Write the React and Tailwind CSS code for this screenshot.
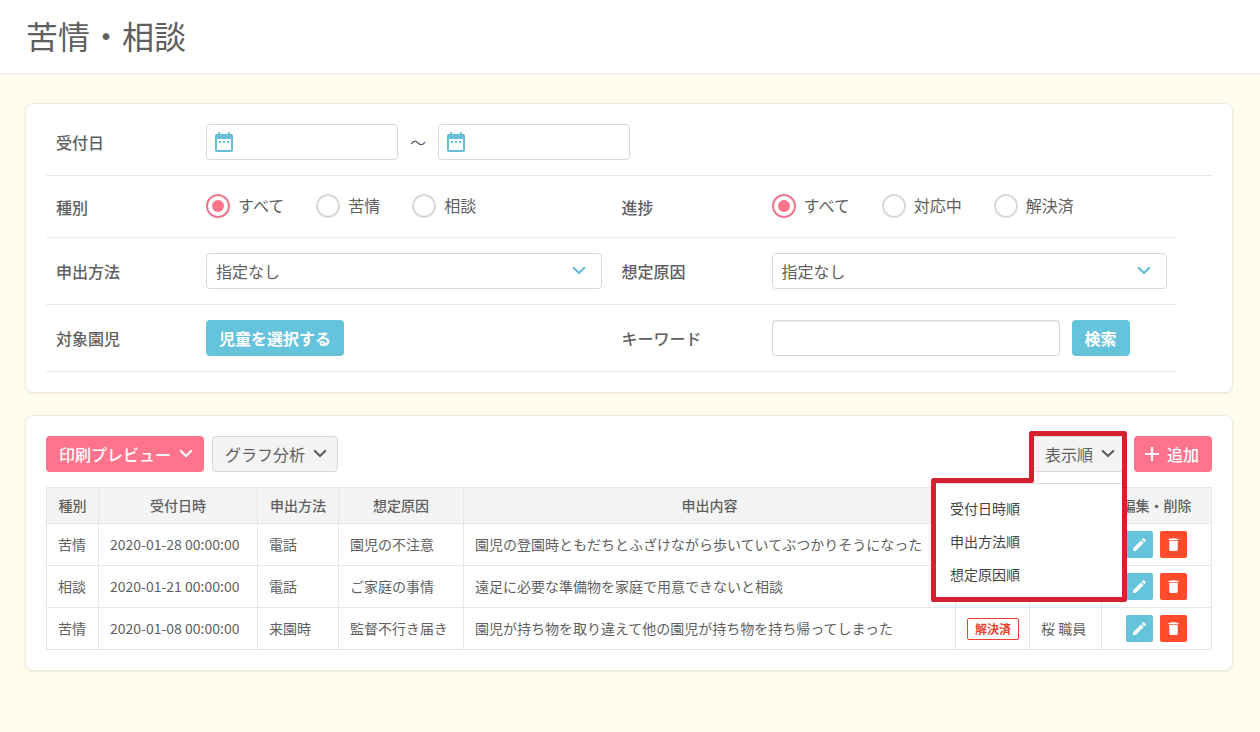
import { useState } from "react";
import { MdDateRange, MdEdit, MdDelete } from "react-icons/md";

function Chevron({ className = "" }) {
  return (
    <svg viewBox="0 0 14 14" aria-hidden="true" className={`size-[14px] shrink-0 ${className}`}>
      <path
        d="M1.8 4 7 9 12.2 4"
        fill="none"
        stroke="currentColor"
        strokeWidth="2.3"
        strokeLinecap="round"
      />
    </svg>
  );
}

function Plus() {
  return (
    <svg viewBox="0 0 14 14" aria-hidden="true" className="size-[14px] shrink-0">
      <path d="M7 0V14M0 7H14" fill="none" stroke="currentColor" strokeWidth="2.2" />
    </svg>
  );
}

function Card({ children }) {
  return (
    <section className="rounded-lg border border-[#ecebe2] bg-white p-5 shadow-[0_1px_2px_rgba(0,0,0,0.06)]">
      {children}
    </section>
  );
}

function DateBox({ label }) {
  return (
    <div className="grid items-center">
      <input
        type="text"
        aria-label={label}
        className="col-start-1 row-start-1 h-9 w-48 rounded border border-[#d9d9d9] bg-white pr-2 pl-9"
      />
      <MdDateRange
        aria-hidden="true"
        className="pointer-events-none col-start-1 row-start-1 ml-1.5 size-6 text-[#66bfd6]"
      />
    </div>
  );
}

function RadioGroup({ name, label, options }) {
  return (
    <div role="radiogroup" aria-label={label} className="flex items-center gap-8 pb-0.5">
      {options.map((option, i) => (
        <label key={option} className="flex items-center gap-2">
          <input
            type="radio"
            name={name}
            defaultChecked={i === 0}
            className="grid size-6 shrink-0 appearance-none place-items-center rounded-full border-2 border-[#d9d9d9] bg-white before:size-3 before:rounded-full checked:border-[#e8788f] checked:before:bg-[#ff748c]"
          />
          <span className="pb-0.5">{option}</span>
        </label>
      ))}
    </div>
  );
}

function Select({ id }) {
  return (
    <div className="grid flex-1 items-center">
      <select
        id={id}
        className="col-start-1 row-start-1 h-9 w-full appearance-none rounded border border-[#d9d9d9] bg-white px-[9px]"
      >
        <option>指定なし</option>
      </select>
      <Chevron className="pointer-events-none col-start-1 row-start-1 mr-4 justify-self-end text-[#66bfd6]" />
    </div>
  );
}

function Field({ label, htmlFor, children }) {
  return (
    <div className="flex min-h-[31px] flex-1 items-center pr-2.5">
      <div className="w-40 shrink-0 px-2.5 font-medium">
        {htmlFor ? <label htmlFor={htmlFor}>{label}</label> : label}
      </div>
      {children}
    </div>
  );
}

function Row({ children }) {
  return <div className="flex w-[97%] border-b border-[#e8e8e8] py-[15px]">{children}</div>;
}

function SearchPanel() {
  return (
    <Card>
      <form onSubmit={(e) => e.preventDefault()}>
        <div className="flex border-b border-[#e8e8e8] pb-[15px]">
          <Field label="受付日">
            <div className="flex items-center gap-3">
              <DateBox label="受付日（開始）" />
              <span className="w-4">～</span>
              <DateBox label="受付日（終了）" />
            </div>
          </Field>
        </div>
        <Row>
          <Field label="種別">
            <RadioGroup name="kind" label="種別" options={["すべて", "苦情", "相談"]} />
          </Field>
          <Field label="進捗">
            <RadioGroup name="progress" label="進捗" options={["すべて", "対応中", "解決済"]} />
          </Field>
        </Row>
        <Row>
          <Field label="申出方法" htmlFor="method">
            <Select id="method" />
          </Field>
          <Field label="想定原因" htmlFor="cause">
            <Select id="cause" />
          </Field>
        </Row>
        <Row>
          <Field label="対象園児">
            <button type="button" className="h-9 rounded bg-[#66c3dc] px-[13px] font-bold text-white">
              児童を選択する
            </button>
          </Field>
          <Field label="キーワード" htmlFor="keyword">
            <div className="flex gap-3">
              <input
                id="keyword"
                type="text"
                className="h-9 w-72 rounded border border-[#d9d9d9] bg-white px-2 shadow-[inset_0_1px_2px_rgba(0,0,0,0.08)]"
              />
              <button type="submit" className="h-9 rounded bg-[#66c3dc] px-[13px] font-bold text-white">
                検索
              </button>
            </div>
          </Field>
        </Row>
      </form>
    </Card>
  );
}

function SortMenu() {
  const [open, setOpen] = useState(true);
  return (
    <div className="relative">
      <button
        type="button"
        aria-expanded={open}
        onClick={() => setOpen(!open)}
        className="flex h-9 items-center gap-2 rounded border border-[#d9d9d9] bg-[#f4f4f4] pr-2.5 pl-3"
      >
        表示順
        <Chevron />
      </button>
      {open && (
        <>
          <ul className="absolute top-[47px] right-0 z-10 w-48 rounded border border-[#dcdcdc] bg-white py-[7px] text-sm text-[#444]">
            {["受付日時順", "申出方法順", "想定原因順"].map((item) => (
              <li key={item}>
                <button type="button" className="h-[33px] w-full px-[15px] text-left">
                  {item}
                </button>
              </li>
            ))}
          </ul>
          <svg
            viewBox="0 0 196 171"
            aria-hidden="true"
            className="pointer-events-none absolute -top-[5px] -right-px z-20 h-[171px] w-[196px]"
          >
            <path
              d="M100.5 2.5H193.5V168.5H2.5V49.5H100.5Z"
              fill="none"
              stroke="#d3222e"
              strokeWidth="5"
              strokeLinejoin="round"
            />
          </svg>
        </>
      )}
    </div>
  );
}

const columns = [
  ["種別", "w-[52px]"],
  ["受付日時", "w-[159px]"],
  ["申出方法", "w-[81px]"],
  ["想定原因", "w-[125px]"],
  ["申出内容", ""],
  ["", "w-[74px]"],
  ["", "w-[72px]"],
  ["編集・削除", "w-[110px]"],
];

const records = [
  ["苦情", "2020-01-28 00:00:00", "電話", "園児の不注意", "園児の登園時ともだちとふざけながら歩いていてぶつかりそうになった", "", ""],
  ["相談", "2020-01-21 00:00:00", "電話", "ご家庭の事情", "遠足に必要な準備物を家庭で用意できないと相談", "", ""],
  ["苦情", "2020-01-08 00:00:00", "来園時", "監督不行き届き", "園児が持ち物を取り違えて他の園児が持ち物を持ち帰ってしまった", "解決済", "桜 職員"],
];

function RecordTable() {
  return (
    <table className="mt-[15px] w-full table-fixed border-collapse text-sm whitespace-nowrap">
      <thead>
        <tr className="h-9 bg-[#f4f4f4]">
          {columns.map(([title, width], i) => (
            <th key={i} className={`border border-[#e6e6e6] p-0 pb-0.5 font-medium ${width}`}>
              {title}
            </th>
          ))}
        </tr>
      </thead>
      <tbody>
        {records.map((record) => (
          <tr key={record[1]} className="h-[42px]">
            {record.map((value, i) =>
              i === 5 ? (
                <td key={i} className="border border-[#e6e6e6] py-0 pr-2.5 pl-[11px]">
                  {value && (
                    <span className="flex h-[22px] items-center justify-center rounded-xs border border-[#e5432f] text-xs font-bold text-[#e5432f]">
                      {value}
                    </span>
                  )}
                </td>
              ) : (
                <td key={i} className="border border-[#e6e6e6] pt-0 pr-0 pb-0.5 pl-[11px]">
                  {value}
                </td>
              ),
            )}
            <td className="border border-[#e6e6e6] p-0">
              <div className="flex justify-center gap-[7px]">
                <button
                  type="button"
                  aria-label="編集"
                  className="grid size-[27px] place-items-center rounded-xs bg-[#66c3dc] text-white"
                >
                  <MdEdit className="size-[17px]" />
                </button>
                <button
                  type="button"
                  aria-label="削除"
                  className="grid size-[27px] place-items-center rounded-xs bg-[#ff4a2b] text-white"
                >
                  <MdDelete className="size-[17px]" />
                </button>
              </div>
            </td>
          </tr>
        ))}
      </tbody>
    </table>
  );
}

export default function App() {
  return (
    <div className="min-h-screen bg-[#fffbee] font-['Noto_Sans_CJK_JP',sans-serif] text-base text-[#5f5f5f]">
      <header className="flex h-[74px] items-center border-b border-[#ecebe2] bg-white px-[26px] pb-1">
        <h1 className="text-[32px]">苦情・相談</h1>
      </header>
      <main className="flex flex-col gap-[22px] pt-[29px] pr-[27px] pb-8 pl-[25px]">
        <SearchPanel />
        <Card>
          <div className="flex gap-2">
            <button
              type="button"
              className="flex h-9 items-center gap-2 rounded bg-[#ff748c] pr-[11px] pl-[13px] font-medium text-white"
            >
              印刷プレビュー
              <Chevron />
            </button>
            <button
              type="button"
              className="flex h-9 items-center gap-2 rounded border border-[#d9d9d9] bg-[#f4f4f4] pr-2.5 pl-3"
            >
              グラフ分析
              <Chevron />
            </button>
            <div className="ml-auto">
              <SortMenu />
            </div>
            <button
              type="button"
              className="flex h-9 items-center gap-2 rounded bg-[#ff748c] pr-[13px] pl-[11px] font-medium text-white"
            >
              <Plus />
              追加
            </button>
          </div>
          <RecordTable />
        </Card>
      </main>
    </div>
  );
}
